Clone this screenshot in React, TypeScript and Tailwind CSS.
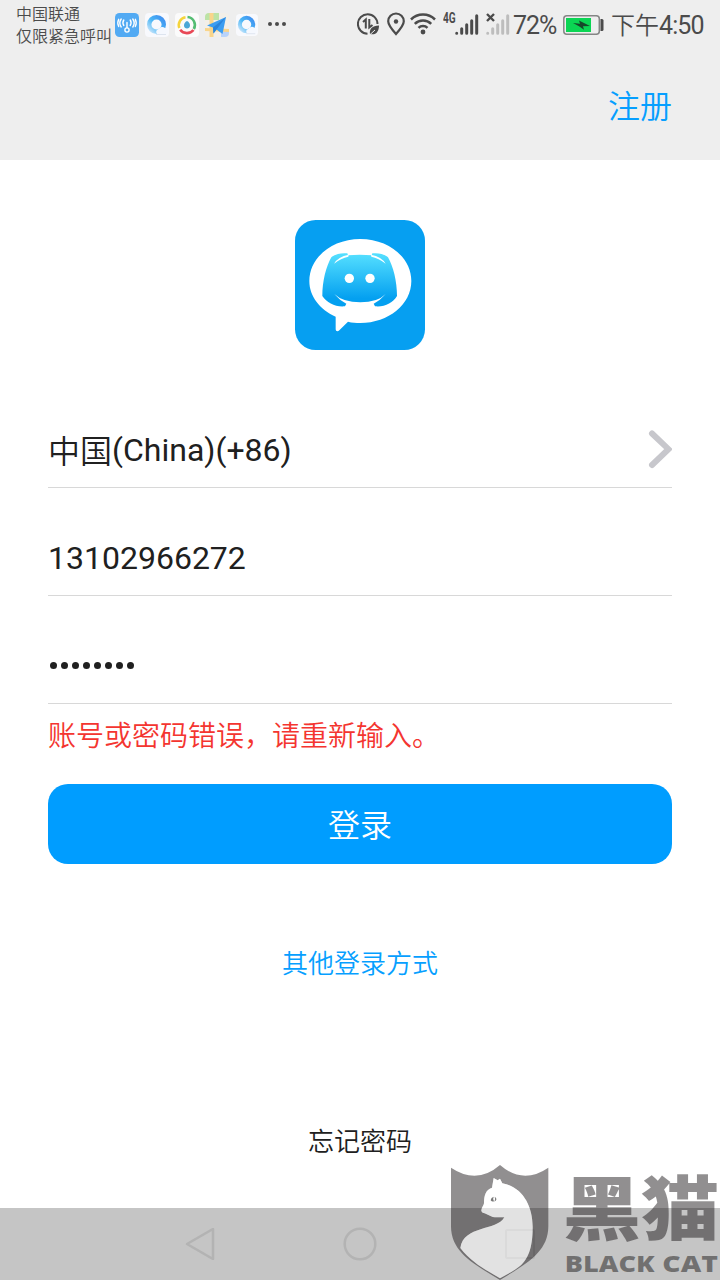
import React from 'react';

interface SignalProps {
  className?: string;
}

const SignalBars: React.FC<SignalProps> = ({ className = '' }) => (
  <svg className={`h-[22px] w-6 ${className}`} viewBox="0 0 24 22" stroke="currentColor" strokeWidth="3" strokeLinecap="round">
    <path d="M1.7 20.3v0M6.700 20.3v-4.6M11.7 20.3v-8.6M16.7 20.3v-12.6M21.7 20.3v-17.6" />
  </svg>
);

const BrowserIcon: React.FC<{ id: string; className: string }> = ({ id, className }) => (
  <svg className={className} viewBox="0 0 24 24" fill="none">
    <defs>
      <linearGradient id={id} x1="0" y1="1" x2="1" y2="0">
        <stop offset="0" stopColor="#c9e6fb" />
        <stop offset="0.5" stopColor="#49b5f5" />
        <stop offset="1" stopColor="#3f8df0" />
      </linearGradient>
    </defs>
    <rect width="24" height="24" rx="4" fill="#f8f9fd" />
    <circle cx="11.5" cy="11.5" r="7.3" stroke={`url(#${id})`} strokeWidth="4.4" />
    <path d="M12 21a3 3 0 0 1 1.500-5 4.500 4.500 0 0 1 6.500-1 3.300 3.300 0 0 1 1.500 6z" fill="#f5f8fe" />
    <path d="M11 21.500h10" stroke="#dde4ef" />
  </svg>
);

const HotspotIcon = () => (
  <svg className="size-6" viewBox="0 0 24 24" fill="none" stroke="#fff" strokeWidth="1.4" strokeLinecap="round">
    <rect width="24" height="24" rx="4.5" fill="#52aaf3" stroke="none" />
    <circle cx="12" cy="17" r="2.1" />
    <path d="M12 14.800V9.500M8.800 7a5 5 0 0 0 0 5.500M15.200 7a5 5 0 0 1 0 5.500M6.200 6a7 7 0 0 0 0 8M17.800 6a7 7 0 0 1 0 8M3.700 6.300a8 8 0 0 0 0 7.200M20.300 6.300a8 8 0 0 1 0 7.200" />
  </svg>
);

const RingIcon = () => (
  <svg className="size-6" viewBox="0 0 24 24" fill="none" strokeWidth="2.6">
    <rect width="24" height="24" rx="4" fill="#fbfbfb" />
    <path d="M4.3 15A8 8 0 0 1 10.500 4.300" stroke="#f5d43b" />
    <path d="M12.500 4A8 8 0 0 1 18.800 16" stroke="#55bd73" />
    <path d="M18.500 17A8.400 8.400 0 0 1 5.200 16.800" stroke="#e84856" />
    <path d="M12 8c2 1 3 2.500 3 4.500S13.700 15.500 12 15.500s-3-1-3-3S10 9 12 8z" fill="#4ba7d6" />
  </svg>
);

const MapIcon = () => (
  <svg className="size-6" viewBox="0 0 24 24">
    <rect width="24" height="24" rx="4" fill="#f3efe8" />
    <path d="M4 0h10v7H0V4a4 4 0 0 1 4-4z" fill="#bce3a6" />
    <path d="M16 18h8v2a4 4 0 0 1-4 4h-4z" fill="#b9d3fa" />
    <path d="M4.500 0h4v24h-4zM0 15l24 1v3L0 18z" fill="#f9d58b" />
    <path d="M21 4 2 12.500l6 2 .5 6 3-4 6 4.500z" fill="#3c9df1" />
    <path d="M21 4 8 14.500l.5 6 3-4z" fill="#2c84da" />
  </svg>
);

const StatusBar = () => (
  <div className="flex h-12 text-[#4b4b4b]">
    <div className="w-[115px] shrink-0 whitespace-nowrap pl-4 pt-[4px] text-[16px] font-[350] leading-[22px]">
      <div>中国联通</div>
      <div>仅限紧急呼叫</div>
    </div>
    <div className="mt-[13px] flex h-6 w-[242px] shrink-0 gap-[6px]">
      <HotspotIcon />
      <BrowserIcon id="browser-a" className="size-6" />
      <RingIcon />
      <MapIcon />
      <BrowserIcon id="browser-b" className="mx-[1px] mt-[1px] size-[22px]" />
      <svg className="ml-[2px] h-6 w-5" viewBox="0 0 20 24" fill="currentColor">
        <circle cx="3" cy="11" r="2" />
        <circle cx="10" cy="11" r="2" />
        <circle cx="17" cy="11" r="2" />
      </svg>
    </div>
    <div className="flex items-start">
      <svg className="mt-3 h-6 w-[23px]" viewBox="0 0 23 24" fill="none" stroke="currentColor" strokeWidth="2">
        <path d="M10.500 21.800A9.800 9.800 0 1 1 20.500 12" />
        <path d="m6 10 2.800-2.500V16.500M12.300 7v8.500l3.200-2.500" />
        <path d="M13 22c-1-5 2-8 9-8.500 0 6-3 10-9 8.500z" fill="currentColor" stroke="none" />
        <path d="m12 23.500 6-5.500" stroke="#eee" strokeWidth="1" />
      </svg>
      <svg className="ml-[7px] mt-3 h-6 w-[18px]" viewBox="0 0 18 24" fill="none" stroke="currentColor" strokeWidth="2.200">
        <path d="M9 22C4 16.500 1.200 13 1.200 9.300a7.800 7.800 0 0 1 15.600 0C16.800 13 14 16.500 9 22z" />
        <circle cx="9" cy="9.500" r="2.200" fill="currentColor" stroke="none" />
      </svg>
      <svg className="ml-[5px] mt-[13px] h-[22px] w-[26px]" viewBox="0 0 26 22" fill="none" stroke="currentColor" strokeWidth="2.500">
        <path d="M1 6.500a17 17 0 0 1 24 0M4.800 10.900a11.600 11.600 0 0 1 16.400 0M8.500 14.900a6.400 6.400 0 0 1 9 0" />
        <circle cx="13" cy="19" r="2.400" fill="currentColor" stroke="none" />
      </svg>
      <span className="ml-[7px] mt-[12px] w-[12px] origin-left scale-x-[0.72] whitespace-nowrap text-[14px] font-bold leading-[13px]">4G</span>
      <SignalBars className="mt-[13px]" />
      <div className="ml-[7px] flex">
        <svg className="-mr-[9px] mt-[13px] h-[9px] w-[9px]" viewBox="0 0 9 9" stroke="currentColor" strokeWidth="2.400">
          <path d="m1 1 7 7M8 1 1 8" />
        </svg>
        <SignalBars className="mt-[13px] text-[#bdbdbd]" />
      </div>
      <div className="ml-[3px] mt-[10px] w-[50px] whitespace-nowrap text-[25px] leading-[32px] tracking-[-1px]">72%</div>
      <svg className="mt-[15px] h-5 w-[41px]" viewBox="0 0 41 20" fill="none">
        <rect x="0.800" y="0.800" width="35.500" height="18.400" rx="3" stroke="#858585" strokeWidth="1.500" />
        <rect x="3" y="3" width="25" height="14" fill="#0bd553" />
        <path d="M37.500 4H39a1.500 1.500 0 0 1 1.500 1.500v9A1.500 1.500 0 0 1 39 16h-1.500z" fill="#4b4b4b" />
        <path d="m10 8 7 .8-1-3.300 6 3 5 2.500-7 .2 1 3.500-5-3.500z" fill="#17472a" />
      </svg>
      <div className="ml-[7px] mt-[10px] flex whitespace-nowrap leading-[32px]">
        <span className="text-[24px] font-[350]">下午</span>
        <span className="text-[25px] tracking-[-0.9px]">4:50</span>
      </div>
    </div>
  </div>
);

const AppLogo = () => (
  <svg className="size-[130px]" viewBox="30 30 390 390">
    <defs>
      <linearGradient id="face" x1="0" y1="0" x2="0" y2="1">
        <stop offset="0" stopColor="#56e0ff" />
        <stop offset="0.85" stopColor="#04a0f0" />
      </linearGradient>
    </defs>
    <rect x="30" y="30" width="390" height="390" rx="62" fill="#069ff1" />
    <path d="M226 87c85 0 153 56 153 126s-68 126-153 126c-13 0-25-1-37-4l-26 26c-5 5-11 3-11-4v-37c-48-22-79-61-79-107 0-70 68-126 153-126z" fill="#fff" />
    <path
      d="M187 130c-22-2-38 3-48 12-16 28-27 72-27 116 14 21 40 34 68 31l4-8q-20-10-36-29 26 25 78 25t76-25q-16 19-36 29l4 8c28 3 54-10 66-31 0-44-11-88-27-116-10-9-25-14-47-12l-2 6q-36-4-71 0z"
      fill="url(#face)"
    />
    <path d="M147 161q12-21 44-27l-1 6q-22 4-43 21zM302 161q-12-21-44-27l1 6q22 4 43 21z" fill="#fff" />
    <circle cx="193" cy="205" r="14" fill="#fff" />
    <circle cx="255" cy="205" r="14" fill="#fff" />
  </svg>
);

const Field: React.FC<{ children: React.ReactNode }> = ({ children }) => (
  <div className="flex h-[108px] items-end justify-between border-b border-[#d8d8d8] pb-[17px] text-[32px] leading-10 text-[#202020]">
    {children}
  </div>
);

const Watermark = () => (
  <svg className="absolute bottom-0 right-0 h-[125px] w-[280px]" viewBox="0 0 840 375">
    <g fill="#131011" fillOpacity="0.466">
      <path
        fillRule="evenodd"
        d="M33 38q78 52 147-8 69 60 145 8v176c0 82-76 118-145 161C111 332 33 296 33 214zM156 98l5-29 12 7 7-5 7 14c60 10 91 68 91 130 0 65-14 100-43 122-16 12-36 22-55 33-39-24-85-46-119-91 10-69 109-50 132-92h-22c-19 0-27-10-43-14-11-8 4-20 4-28 0-23 5-41 24-47z"
      />
      <text x="368" y="240" textLength="470" lengthAdjust="spacingAndGlyphs" fontFamily="Noto Sans CJK SC, sans-serif" fontWeight="900" fontSize="210">黑猫</text>
      <text x="374" y="352" textLength="270" lengthAdjust="spacingAndGlyphs" fontFamily="Open Sans, sans-serif" fontWeight="800" fontSize="69">BLACK</text>
      <text x="667" y="352" textLength="167" lengthAdjust="spacingAndGlyphs" fontFamily="Open Sans, sans-serif" fontWeight="800" fontSize="69">CAT</text>
    </g>
    <path
      d="M156 98l5-29 12 7 7-5 7 14c60 10 91 68 91 130 0 65-14 100-43 122-16 12-36 22-55 33-39-24-85-46-119-91 10-69 109-50 132-92h-22c-19 0-27-10-43-14-11-8 4-20 4-28 0-23 5-41 24-47z"
      fill="#fff"
      fillOpacity="0.5"
    />
    <path d="M152 136q1-9 9-11-4 8 1 14-6 2-10-3zM164 125q11 7-1 15 5-8 1-15z" fill="#777" />
  </svg>
);

const NavBar = () => (
  <div className="flex h-[72px] items-center justify-center gap-[128px] bg-[#c5c5c5] text-[#b3b3b3]">
    <svg className="-mr-[1px] size-8" viewBox="0 0 32 32" fill="none" stroke="currentColor" strokeWidth="2.500" strokeLinejoin="round">
      <path d="M29 1v30L3 16z" />
    </svg>
    <svg className="size-[34px]" viewBox="0 0 34 34" fill="none" stroke="currentColor" strokeWidth="2.500">
      <circle cx="17" cy="17" r="15.300" />
    </svg>
    <svg className="size-8 text-[#b5b5b5]" viewBox="0 0 32 32" fill="none" stroke="currentColor" strokeWidth="2">
      <rect x="1" y="2" width="28" height="28" rx="1" />
    </svg>
  </div>
);

const App: React.FC = () => {
  return (
    <div className="relative flex h-[1280px] w-[720px] flex-col overflow-hidden bg-white font-['Roboto','Noto_Sans_CJK_SC',sans-serif]">
      <header className="h-40 bg-[#eee]">
        <StatusBar />
        <div className="flex h-28 items-center justify-end px-12 pt-[5px] text-[32px] font-[350] text-[#069fff]">注册</div>
      </header>

      <main className="flex flex-1 flex-col px-12 pt-[60px]">
        <div className="flex justify-center">
          <AppLogo />
        </div>

        <div className="mt-[30px]">
          <Field>
            <span className="flex">
              <span className="relative top-[2px] font-[350]">中国</span>
              <span>(China)(+86)</span>
            </span>
            <svg className="h-10 w-6" viewBox="0 0 24 40" fill="none" stroke="#c7c7cc" strokeWidth="6" strokeLinecap="round">
              <path d="M4 3.500l16.500 15.700L4 35" />
            </svg>
          </Field>
          <Field>
            <span>13102966272</span>
          </Field>
          <Field>
            <span className="flex h-10 items-center gap-[4px] pb-[4px] pl-[2px]">
              {Array.from({ length: 8 }, (_, i) => (
                <span key={i} className="mt-[2px] size-[7px] rounded-full bg-[#202020]" />
              ))}
            </span>
          </Field>
        </div>

        <p className="mt-[13px] h-10 text-[28px] font-[350] leading-10 text-[#f43530]">账号或密码错误，请重新输入。</p>
        <button className="mt-[27px] h-20 rounded-[20px] bg-[#009dff] pt-[4px] text-[32px] font-[350] text-white">登录</button>
        <a className="mt-[82px] text-center text-[26px] font-[350] leading-9 text-[#069fff]">其他登录方式</a>
        <a className="mt-[142px] text-center text-[26px] font-[350] leading-9 text-[#202020]">忘记密码</a>
      </main>

      <NavBar />
      <Watermark />
    </div>
  );
};

export default App;
